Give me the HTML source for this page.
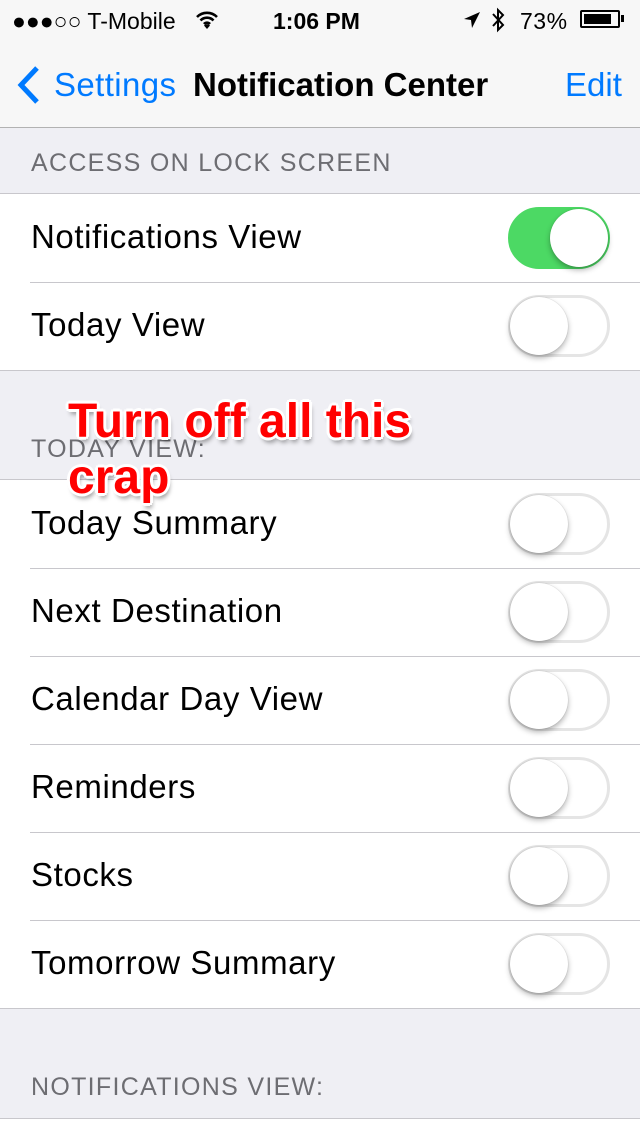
<!DOCTYPE html>
<html><head><meta charset="utf-8"><style>
body{margin:0;width:640px;height:1136px;background:#efeff4;font-family:"Liberation Sans",sans-serif;position:relative;overflow:hidden}
.abs{position:absolute}
.status{top:0;left:0;width:640px;height:128px;background:#f7f7f7;border-bottom:1px solid #b2b2b2;box-sizing:border-box}
.hdr{position:absolute;left:31px;font-size:25px;color:#6d6d72;letter-spacing:1.3px}
.group{position:absolute;left:0;width:640px;background:#fff;border-top:1px solid #c8c7cc;border-bottom:1px solid #c8c7cc;box-sizing:border-box}
.row{height:88px;position:relative}
.row+.row:before{content:"";position:absolute;left:30px;right:0;top:0;border-top:1px solid #c8c7cc}
.row span{position:absolute;left:31px;top:24px;font-size:33px;color:#000;letter-spacing:0.6px}
.tg{position:absolute;left:508px;top:13px;width:102px;height:62px;border-radius:31px;box-sizing:border-box;border:3px solid #e5e5e5;background:#fff}
.tg:after{content:"";position:absolute;top:-1px;left:-1px;width:58px;height:58px;border-radius:50%;background:#fff;box-shadow:0 3px 6px rgba(0,0,0,.3),0 0 1px rgba(0,0,0,.25)}
.tg.on{background:#4cd964;border-color:#4cd964}
.tg.on:after{left:39px}
.ann{font-weight:bold;font-size:48px;color:#f00;line-height:56px;text-shadow:-2px -2px 0 #fff,2px -2px 0 #fff,-2px 2px 0 #fff,2px 2px 0 #fff,0 3px 0 #fff,0 -3px 0 #fff,3px 0 0 #fff,-3px 0 0 #fff,2px 5px 5px rgba(0,0,0,.4)}
</style></head><body>
<div class="abs status">
 <div class="abs" style="left:12px;top:8px;font-size:23px;color:#000">●●●○○ T-Mobile</div>
 <svg class="abs" style="left:195px;top:10px" width="24" height="20" viewBox="0 0 24 20"><path d="M2 7a14 14 0 0 1 20 0M5.5 10.5a9 9 0 0 1 13 0M9 14a4 4 0 0 1 6 0" stroke="#000" stroke-width="2.6" fill="none"/><path d="M12 19l-3-3.5a4 4 0 0 1 6 0z" fill="#000"/></svg>
 <div class="abs" style="left:273px;top:8px;font-size:23px;font-weight:bold">1:06 PM</div>
 <svg class="abs" style="left:463px;top:10px" width="18" height="20" viewBox="0 0 18 20"><path d="M17 2L1 9l7 1 1 8z" fill="#000"/></svg>
 <svg class="abs" style="left:490px;top:7px" width="16" height="26" viewBox="0 0 16 26"><path d="M3 7l10 11-5 5V3l5 5L3 19" stroke="#000" stroke-width="2" fill="none"/></svg>
 <div class="abs" style="left:520px;top:8px;font-size:23px;letter-spacing:0.5px">73%</div>
 <div class="abs" style="left:580px;top:10px;width:40px;height:18px;border:2px solid #000;box-sizing:border-box;border-radius:2px"><div style="margin:2px;width:27px;height:10px;background:#000"></div></div>
 <div class="abs" style="left:621px;top:15px;width:3px;height:7px;background:#000"></div>
 <svg class="abs" style="left:15px;top:65px" width="28" height="40" viewBox="0 0 28 40"><path d="M22 3L6 20l16 17" stroke="#007aff" stroke-width="5" fill="none"/></svg>
 <div class="abs" style="left:54px;top:66px;font-size:33px;color:#007aff;letter-spacing:0.4px">Settings</div>
 <div class="abs" style="left:193px;top:66px;font-size:33px;font-weight:bold;color:#000">Notification Center</div>
 <div class="abs" style="left:565px;top:66px;font-size:33px;color:#007aff">Edit</div>
</div>
<div class="hdr" style="top:149px">ACCESS ON LOCK SCREEN</div>
<div class="group" style="top:193px">
 <div class="row"><span>Notifications View</span><div class="tg on"></div></div>
 <div class="row"><span>Today View</span><div class="tg"></div></div>
</div>
<div class="hdr" style="top:435px">TODAY VIEW:</div>
<div class="group" style="top:479px">
 <div class="row"><span>Today Summary</span><div class="tg"></div></div>
 <div class="row"><span>Next Destination</span><div class="tg"></div></div>
 <div class="row"><span>Calendar Day View</span><div class="tg"></div></div>
 <div class="row"><span>Reminders</span><div class="tg"></div></div>
 <div class="row"><span>Stocks</span><div class="tg"></div></div>
 <div class="row"><span>Tomorrow Summary</span><div class="tg"></div></div>
</div>
<div class="hdr" style="top:1073px">NOTIFICATIONS VIEW:</div>
<div class="abs" style="top:1118px;left:0;width:640px;height:18px;background:#fff;border-top:1px solid #c8c7cc"></div>
<div class="abs ann" style="left:68px;top:394px">Turn off all this<br>crap</div>
</body></html>
